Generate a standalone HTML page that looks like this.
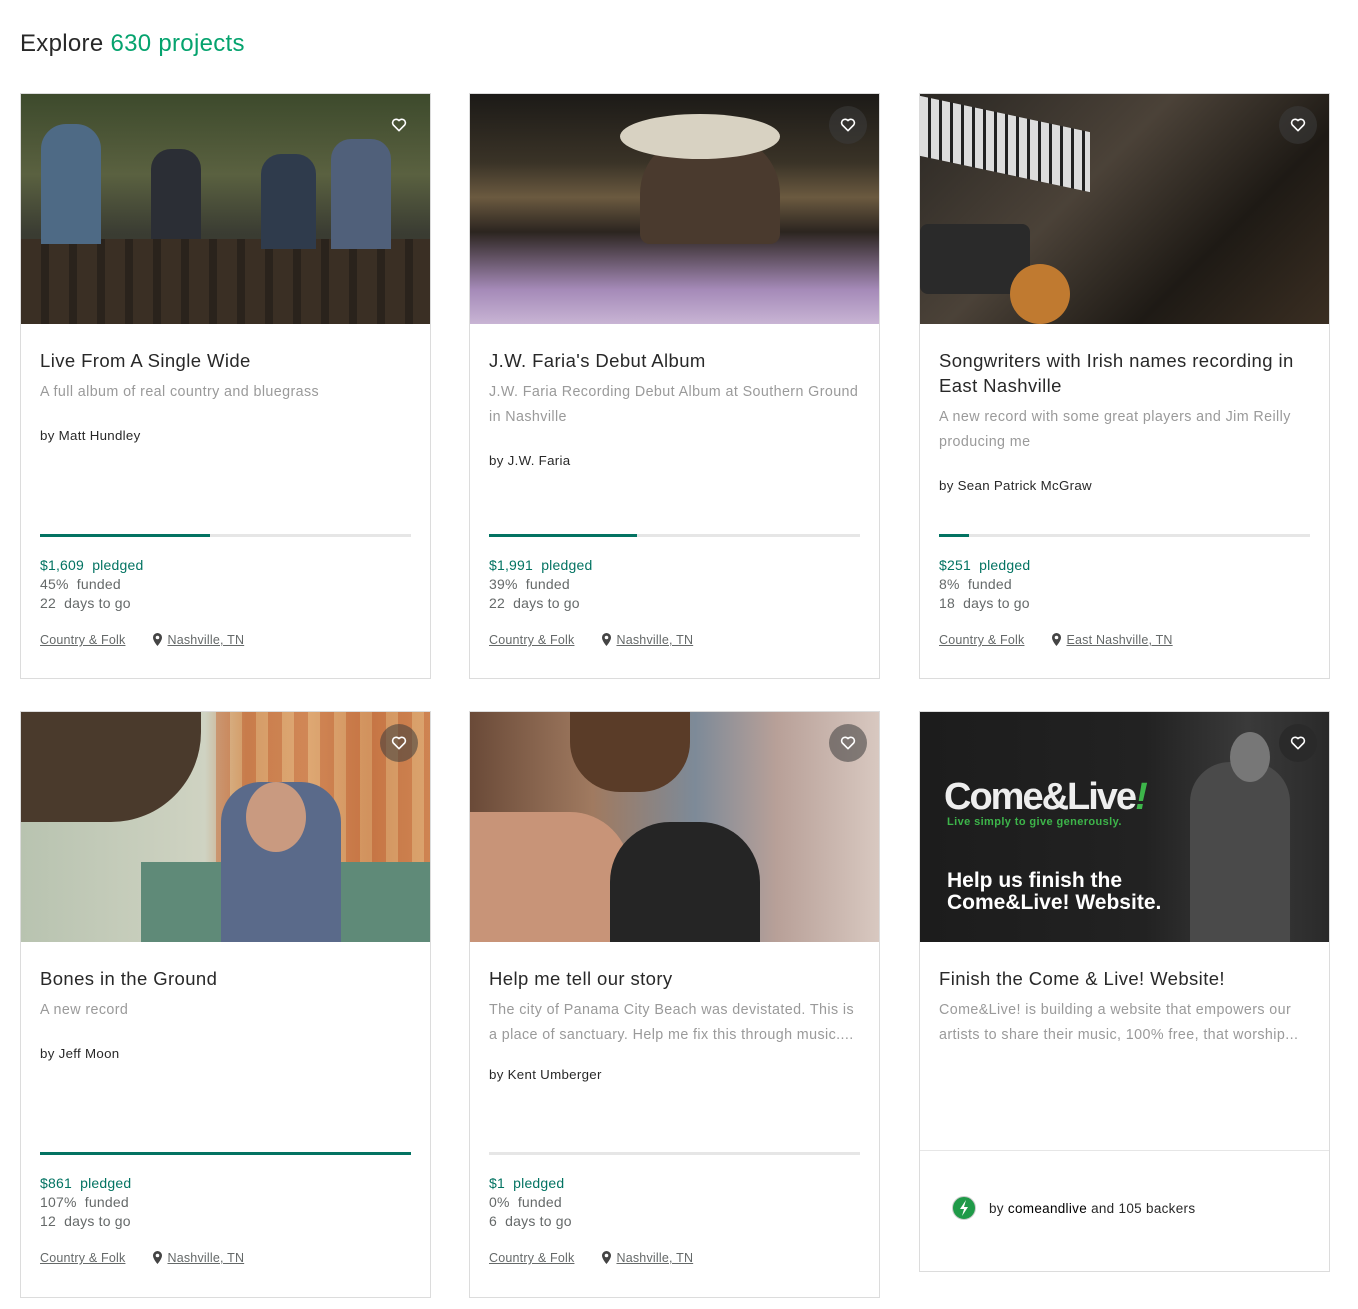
<!DOCTYPE html>
<html><head><meta charset="utf-8">
<style>
*{box-sizing:border-box;margin:0;padding:0}
body{width:1358px;height:1309px;background:#fff;font-family:"Liberation Sans",sans-serif;color:#282828;position:relative;overflow:hidden}
h1{position:absolute;left:20px;top:30px;font-size:24px;font-weight:normal;color:#282828;letter-spacing:0.3px}
h1 span{color:#05a36e}
.card{position:absolute;width:411px;border:1px solid #dcdcdc;background:#fff}
.img{height:230px;position:relative;overflow:hidden}
.heart{position:absolute;right:12px;top:12px;width:38px;height:38px;border-radius:50%;background:rgba(60,60,60,.55);display:flex;align-items:center;justify-content:center}
.t{position:absolute;left:19px;font-size:18.5px;line-height:25px;color:#282828;width:375px;letter-spacing:0.4px}
.d{position:absolute;left:19px;font-size:14.3px;line-height:25px;color:#9a9a9a;width:370px;letter-spacing:0.4px}
.by{position:absolute;left:19px;font-size:13.3px;color:#282828;letter-spacing:0.3px}
.bar{position:absolute;left:19px;width:371px;height:3px;background:#e6e6e6}
.bar i{display:block;height:3px;background:#037362}
.st{position:absolute;left:19px;font-size:14px;line-height:19px;color:#656969;letter-spacing:0.2px}
.st .g{color:#037362}
.lk{position:absolute;left:19px;font-size:12.5px;color:#656969;letter-spacing:0.2px}
.lk u{text-decoration:underline}
.pin{display:inline-block;vertical-align:-2px;margin:0 5px 0 28px}
</style></head><body>
<h1>Explore <span>630 projects</span></h1>

<div class="card" style="left:20px;top:93px;height:586px">
 <div class="img" style="background:linear-gradient(180deg,#3d4a2c 0%,#5a6140 35%,#3b3d33 60%,#2a2620 100%)">
  <div style="position:absolute;left:0;right:0;top:145px;height:85px;background:repeating-linear-gradient(90deg,#3a2f24 0 20px,#2a231c 20px 28px)"></div>
  <div style="position:absolute;left:20px;top:30px;width:60px;height:120px;background:#4e6a85;border-radius:25px 25px 0 0"></div>
  <div style="position:absolute;left:130px;top:55px;width:50px;height:90px;background:#2b2e35;border-radius:20px 20px 0 0"></div>
  <div style="position:absolute;left:240px;top:60px;width:55px;height:95px;background:#2f3b4c;border-radius:20px 20px 0 0"></div>
  <div style="position:absolute;left:310px;top:45px;width:60px;height:110px;background:#50607a;border-radius:20px 20px 0 0"></div>
  <div class="heart" style="background:none"><svg width="16" height="16" viewBox="0 0 24 24"><path d="M12 20.5 3.5 12A5 5 0 0 1 12 5.5 5 5 0 0 1 20.5 12Z" fill="none" stroke="#fff" stroke-width="2.4" stroke-linejoin="round"/></svg></div>
 </div>
 <div class="t" style="top:254px">Live From A Single Wide</div>
 <div class="d" style="top:286px">A full album of real country and bluegrass</div>
 <div class="by" style="top:334px">by Matt Hundley</div>
 <div class="bar" style="top:440px"><i style="width:170px"></i></div>
 <div class="st" style="top:462px"><span class="g">$1,609&nbsp; pledged</span><br>45%&nbsp; funded<br>22&nbsp; days to go</div>
 <div class="lk" style="top:539px"><u>Country &amp; Folk</u><svg class="pin" width="9" height="13" viewBox="0 0 9 13"><path d="M4.5 0A4.5 4.5 0 0 0 0 4.5C0 8 4.5 13 4.5 13S9 8 9 4.5A4.5 4.5 0 0 0 4.5 0Zm0 6.3a1.8 1.8 0 1 1 0-3.6 1.8 1.8 0 0 1 0 3.6Z" fill="#444"/></svg><u>Nashville, TN</u></div>
</div>

<div class="card" style="left:469px;top:93px;height:586px">
 <div class="img" style="background:linear-gradient(180deg,#1c1a17 0%,#3a3327 30%,#6b5a40 45%,#2c2520 60%,#a58ab8 85%,#c8b4d4 100%)">
  <div style="position:absolute;left:170px;top:40px;width:140px;height:110px;background:#4a3a2e;border-radius:60px 60px 10px 10px"></div>
  <div style="position:absolute;left:150px;top:20px;width:160px;height:45px;background:#d8d2c2;border-radius:50%"></div>
  <div class="heart"><svg width="16" height="16" viewBox="0 0 24 24"><path d="M12 20.5 3.5 12A5 5 0 0 1 12 5.5 5 5 0 0 1 20.5 12Z" fill="none" stroke="#fff" stroke-width="2.4" stroke-linejoin="round"/></svg></div>
 </div>
 <div class="t" style="top:254px">J.W. Faria's Debut Album</div>
 <div class="d" style="top:286px">J.W. Faria Recording Debut Album at Southern Ground in Nashville</div>
 <div class="by" style="top:359px">by J.W. Faria</div>
 <div class="bar" style="top:440px"><i style="width:148px"></i></div>
 <div class="st" style="top:462px"><span class="g">$1,991&nbsp; pledged</span><br>39%&nbsp; funded<br>22&nbsp; days to go</div>
 <div class="lk" style="top:539px"><u>Country &amp; Folk</u><svg class="pin" width="9" height="13" viewBox="0 0 9 13"><path d="M4.5 0A4.5 4.5 0 0 0 0 4.5C0 8 4.5 13 4.5 13S9 8 9 4.5A4.5 4.5 0 0 0 4.5 0Zm0 6.3a1.8 1.8 0 1 1 0-3.6 1.8 1.8 0 0 1 0 3.6Z" fill="#444"/></svg><u>Nashville, TN</u></div>
</div>

<div class="card" style="left:919px;top:93px;height:586px">
 <div class="img" style="background:linear-gradient(135deg,#2a2723 0%,#4b4238 40%,#1e1a15 70%,#3a2e22 100%)">
  <div style="position:absolute;left:0;top:20px;width:170px;height:60px;background:repeating-linear-gradient(90deg,#ddd 0 8px,#222 8px 11px);transform:skewY(12deg)"></div>
  <div style="position:absolute;left:0;top:130px;width:110px;height:70px;background:#2a2a2a;border-radius:8px"></div>
  <div style="position:absolute;left:90px;top:170px;width:60px;height:60px;background:#c07a30;border-radius:50%"></div>
  <div class="heart"><svg width="16" height="16" viewBox="0 0 24 24"><path d="M12 20.5 3.5 12A5 5 0 0 1 12 5.5 5 5 0 0 1 20.5 12Z" fill="none" stroke="#fff" stroke-width="2.4" stroke-linejoin="round"/></svg></div>
 </div>
 <div class="t" style="top:254px">Songwriters with Irish names recording in East Nashville</div>
 <div class="d" style="top:311px">A new record with some great players and Jim Reilly producing me</div>
 <div class="by" style="top:384px">by Sean Patrick McGraw</div>
 <div class="bar" style="top:440px"><i style="width:30px"></i></div>
 <div class="st" style="top:462px"><span class="g">$251&nbsp; pledged</span><br>8%&nbsp; funded<br>18&nbsp; days to go</div>
 <div class="lk" style="top:539px"><u>Country &amp; Folk</u><svg class="pin" width="9" height="13" viewBox="0 0 9 13"><path d="M4.5 0A4.5 4.5 0 0 0 0 4.5C0 8 4.5 13 4.5 13S9 8 9 4.5A4.5 4.5 0 0 0 4.5 0Zm0 6.3a1.8 1.8 0 1 1 0-3.6 1.8 1.8 0 0 1 0 3.6Z" fill="#444"/></svg><u>East Nashville, TN</u></div>
</div>

<div class="card" style="left:20px;top:711px;height:587px">
 <div class="img" style="background:linear-gradient(90deg,#b8c3b0 0%,#cfd3c2 45%,#c88a5a 55%,#d9a070 70%,#c47c4c 85%,#d49a68 100%)">
  <div style="position:absolute;left:195px;top:0;width:215px;height:230px;background:repeating-linear-gradient(90deg,rgba(200,110,60,.5) 0 14px,rgba(230,180,120,.4) 14px 26px)"></div>
  <div style="position:absolute;left:0;top:0;width:180px;height:110px;background:#4a3a2c;border-radius:0 0 90px 0"></div>
  <div style="position:absolute;left:120px;top:150px;width:290px;height:80px;background:#5f8a78"></div>
  <div style="position:absolute;left:200px;top:70px;width:120px;height:160px;background:#5a6a8a;border-radius:40px 40px 0 0"></div>
  <div style="position:absolute;left:225px;top:70px;width:60px;height:70px;background:#c99a80;border-radius:50%"></div>
  <div class="heart"><svg width="16" height="16" viewBox="0 0 24 24"><path d="M12 20.5 3.5 12A5 5 0 0 1 12 5.5 5 5 0 0 1 20.5 12Z" fill="none" stroke="#fff" stroke-width="2.4" stroke-linejoin="round"/></svg></div>
 </div>
 <div class="t" style="top:254px">Bones in the Ground</div>
 <div class="d" style="top:286px">A new record</div>
 <div class="by" style="top:334px">by Jeff Moon</div>
 <div class="bar" style="top:440px"><i style="width:371px"></i></div>
 <div class="st" style="top:462px"><span class="g">$861&nbsp; pledged</span><br>107%&nbsp; funded<br>12&nbsp; days to go</div>
 <div class="lk" style="top:539px"><u>Country &amp; Folk</u><svg class="pin" width="9" height="13" viewBox="0 0 9 13"><path d="M4.5 0A4.5 4.5 0 0 0 0 4.5C0 8 4.5 13 4.5 13S9 8 9 4.5A4.5 4.5 0 0 0 4.5 0Zm0 6.3a1.8 1.8 0 1 1 0-3.6 1.8 1.8 0 0 1 0 3.6Z" fill="#444"/></svg><u>Nashville, TN</u></div>
</div>

<div class="card" style="left:469px;top:711px;height:587px">
 <div class="img" style="background:linear-gradient(90deg,#6a4a38 0%,#a07a60 30%,#7d8a98 55%,#b8a098 75%,#d8c8c0 100%)">
  <div style="position:absolute;left:0;top:100px;width:160px;height:130px;background:#c89478;border-radius:0 60px 0 0"></div>
  <div style="position:absolute;left:140px;top:110px;width:150px;height:120px;background:#252525;border-radius:60px 60px 0 0"></div>
  <div style="position:absolute;left:100px;top:0;width:120px;height:80px;background:#5a3c28;border-radius:0 0 50px 50px"></div>
  <div class="heart"><svg width="16" height="16" viewBox="0 0 24 24"><path d="M12 20.5 3.5 12A5 5 0 0 1 12 5.5 5 5 0 0 1 20.5 12Z" fill="none" stroke="#fff" stroke-width="2.4" stroke-linejoin="round"/></svg></div>
 </div>
 <div class="t" style="top:254px">Help me tell our story</div>
 <div class="d" style="top:286px">The city of Panama City Beach was devistated. This is a place of sanctuary. Help me fix this through music....</div>
 <div class="by" style="top:355px">by Kent Umberger</div>
 <div class="bar" style="top:440px"><i style="width:0"></i></div>
 <div class="st" style="top:462px"><span class="g">$1&nbsp; pledged</span><br>0%&nbsp; funded<br>6&nbsp; days to go</div>
 <div class="lk" style="top:539px"><u>Country &amp; Folk</u><svg class="pin" width="9" height="13" viewBox="0 0 9 13"><path d="M4.5 0A4.5 4.5 0 0 0 0 4.5C0 8 4.5 13 4.5 13S9 8 9 4.5A4.5 4.5 0 0 0 4.5 0Zm0 6.3a1.8 1.8 0 1 1 0-3.6 1.8 1.8 0 0 1 0 3.6Z" fill="#444"/></svg><u>Nashville, TN</u></div>
</div>

<div class="card" style="left:919px;top:711px;height:561px">
 <div class="img" style="background:linear-gradient(90deg,#1c1c1c 0%,#222 55%,#3a3a3a 80%,#2a2a2a 100%)">
  <div style="position:absolute;left:270px;top:50px;width:100px;height:180px;background:#4a4a4a;border-radius:40px 40px 0 0"></div>
  <div style="position:absolute;left:310px;top:20px;width:40px;height:50px;background:#777;border-radius:50%"></div>
  <div style="position:absolute;left:24px;top:64px;font-size:38px;font-weight:bold;color:#eee;letter-spacing:-2px">Come&amp;Live<span style="color:#3db54a;font-style:italic">!</span></div>
  <div style="position:absolute;left:27px;top:104px;font-size:11px;font-weight:bold;color:#3db54a;letter-spacing:0.4px">Live simply to give generously.</div>
  <div style="position:absolute;left:27px;top:158px;font-size:21px;font-weight:bold;color:#fff;line-height:22px">Help us finish the<br>Come&amp;Live! Website.</div>
  <div class="heart" style="background:#2a2a2a"><svg width="16" height="16" viewBox="0 0 24 24"><path d="M12 20.5 3.5 12A5 5 0 0 1 12 5.5 5 5 0 0 1 20.5 12Z" fill="none" stroke="#fff" stroke-width="2.4" stroke-linejoin="round"/></svg></div>
 </div>
 <div class="t" style="top:254px">Finish the Come &amp; Live! Website!</div>
 <div class="d" style="top:286px">Come&amp;Live! is building a website that empowers our artists to share their music, 100% free, that worship...</div>
 <div style="position:absolute;left:0;right:0;top:438px;border-top:1px solid #e6e6e6"></div>
 <div style="position:absolute;left:32px;top:484px;width:24px;height:24px;border-radius:50%;background:#1f9a48;border:1px solid #ccc"><svg width="22" height="22" viewBox="0 0 22 22"><path d="M13 3 7 12h4l-2 7 6-9h-4z" fill="#fff"/></svg></div>
 <div style="position:absolute;left:69px;top:489px;font-size:13.5px;color:#282828;letter-spacing:0.3px">by <span style="color:#000">comeandlive</span> and 105 backers</div>
</div>
</body></html>
